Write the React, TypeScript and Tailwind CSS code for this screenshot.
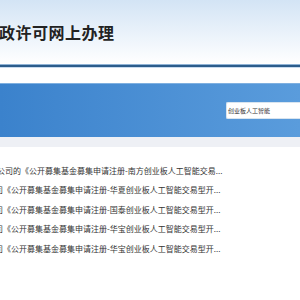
export default function App() {
  const rows = [
    { pre: "公司的", ml: "ml-[-3px]", text: "《公开募集基金募集申请注册-南方创业板人工智能交易..." },
    { pre: "司", ml: "ml-[-5px]", text: "《公开募集基金募集申请注册-华夏创业板人工智能交易型开..." },
    { pre: "司", ml: "ml-[-5px]", text: "《公开募集基金募集申请注册-国泰创业板人工智能交易型开..." },
    { pre: "司", ml: "ml-[-5px]", text: "《公开募集基金募集申请注册-华宝创业板人工智能交易型开..." },
    { pre: "司", ml: "ml-[-5px]", text: "《公开募集基金募集申请注册-华宝创业板人工智能交易型开..." },
  ];
  return (
    <div
      className="w-[300px] h-[300px] overflow-hidden bg-white"
      style={{ fontFamily: '"Noto Sans CJK SC", "Noto Sans", sans-serif' }}
    >
      <div className="h-[64px] bg-gradient-to-b from-[#d3e4f5] to-white flex items-start pt-[22px]">
        <div className="ml-[-1px] text-[16px] leading-[20px] font-bold text-[#222] whitespace-nowrap tracking-[0.5px]">
          政许可网上办理
        </div>
      </div>
      <div className="h-px bg-[#8fb3d6]" />
      <div className="h-[2px] bg-[#2d5d8c]" />
      <div className="h-px bg-[#c9dbee]" />
      <div className="h-[15px] bg-white" />
      <div className="h-px bg-[#7fb0e0]" />
      <div className="h-[53px] bg-gradient-to-r from-[#3b82cc] to-[#5a9cdc] flex items-center justify-end">
        <div className="w-[74px] h-[17px] bg-white rounded-l-[2px] border border-[#d8e4ef] border-r-0 flex items-center pl-[1px]">
          <span className="text-[6px] leading-none text-[#333] whitespace-nowrap">创业板人工智能</span>
        </div>
      </div>
      <div className="h-[10px] bg-[#eef0f5]" />
      <div className="pt-[14px] flex flex-col">
        {rows.map((r, i) => (
          <div key={i} className={`h-[19.5px] flex items-center whitespace-nowrap text-[8px] text-[#333] ${r.ml}`}>
            {r.pre}
            {r.text}
          </div>
        ))}
      </div>
    </div>
  );
}
